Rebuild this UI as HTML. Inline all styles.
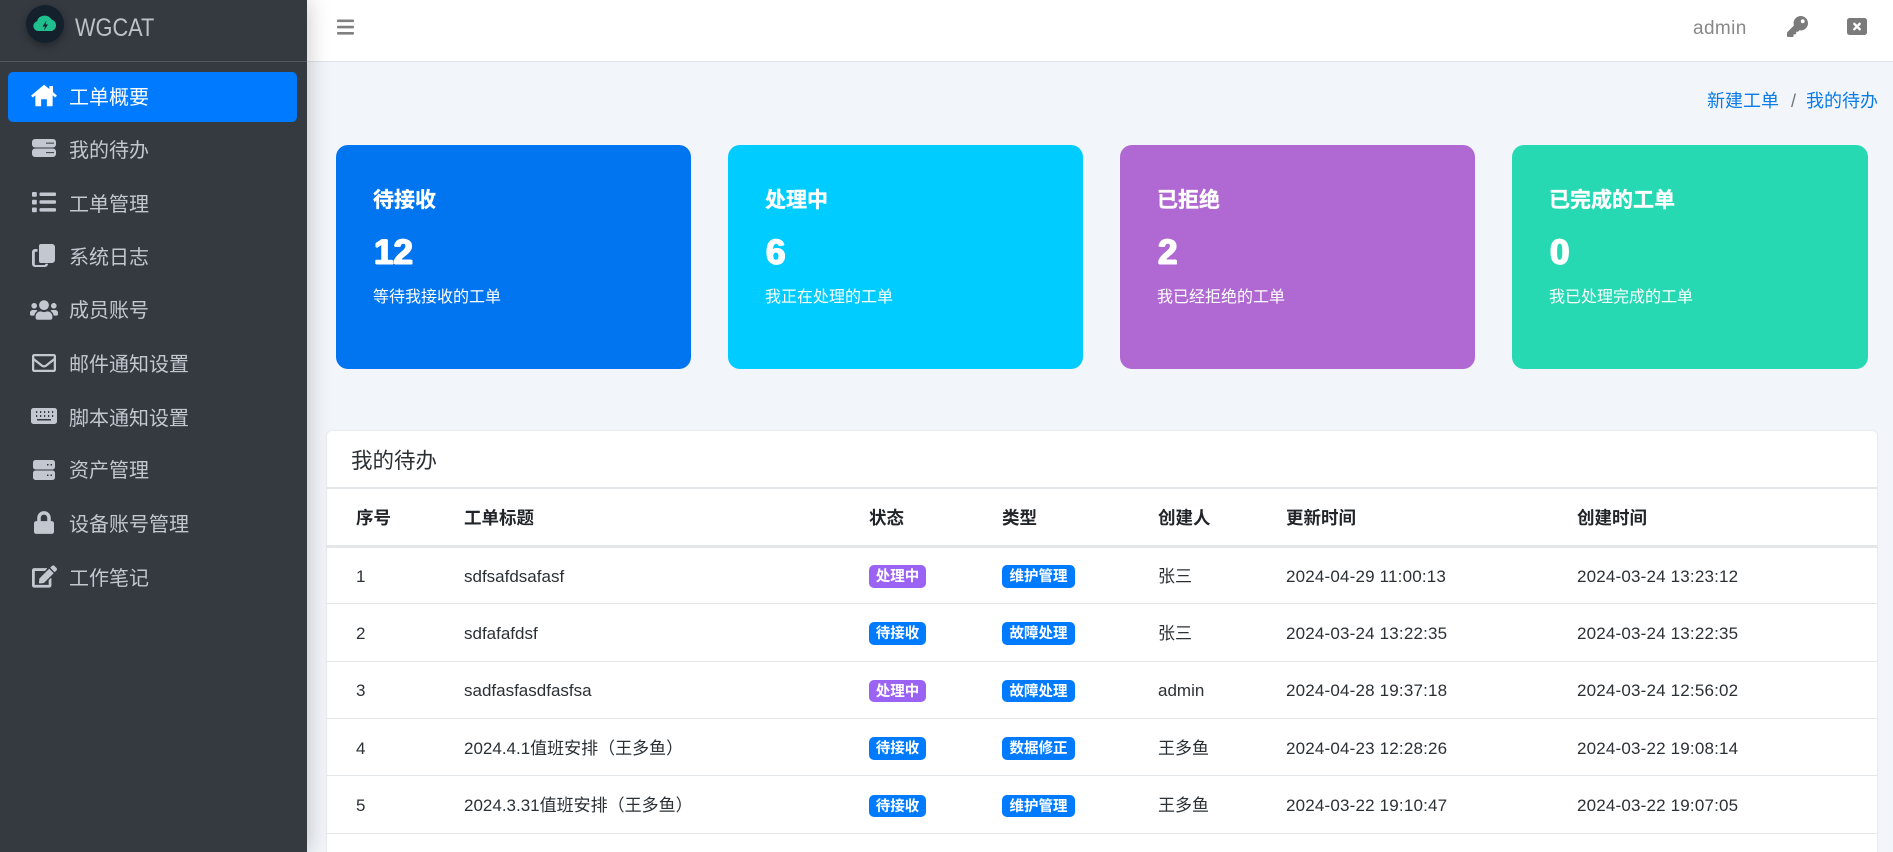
<!DOCTYPE html>
<html lang="zh-CN"><head><meta charset="utf-8"><title>WGCAT</title>
<style>
*{box-sizing:border-box}
html,body{margin:0;padding:0;width:1893px;height:852px;overflow:hidden;background:#f2f6fa;font-family:"Liberation Sans","Noto Sans CJK SC",sans-serif;color:#2b3035}
#root{position:relative;width:1893px;height:852px;overflow:hidden;background:#f2f6fa}
.a,.t,.nv,.b{position:absolute;white-space:nowrap}
.t{height:30px;line-height:30px;font-size:17px;margin-top:1px}
.d{letter-spacing:.18px}
#top{position:absolute;left:307px;top:0;width:1586px;height:62px;background:#fff;border-bottom:1px solid #dee2e6}
#side{position:absolute;left:0;top:0;width:307px;height:852px;background:#343a40;box-shadow:0 0 22px rgba(0,0,0,.24)}
#side hr{position:absolute;left:0;top:61px;width:307px;height:1px;margin:0;border:0;background:#4f5962}
.nv{left:69px;height:30px;line-height:30px;font-size:20px;color:#c2c7d0;margin-top:1px}
.ic{position:absolute;fill:#c2c7d0}
.card{position:absolute;top:145px;width:355px;height:224px;border-radius:12px;color:#fff}
.card b,.card i,.card span{position:absolute;left:37px;white-space:nowrap;font-style:normal}
.card b{top:41px;line-height:30px;font-size:21px;font-weight:700;-webkit-text-stroke:.3px #fff}
.card i{left:38px;top:86px;line-height:44px;font-size:35px;font-weight:700;text-shadow:.9px 0 #fff,-.9px 0 #fff,0 .6px #fff,0 -.6px #fff,.6px .4px #fff,-.6px -.4px #fff}
.card span{top:138px;line-height:30px;font-size:16px}
#panel{position:absolute;left:327px;top:431px;width:1550px;height:440px;background:#fff;border-radius:5px;box-shadow:0 0 2px rgba(0,0,0,.12)}
.ln{position:absolute;left:327px;width:1550px;height:2px;background:#e4e7ea}
.h{font-weight:700;font-size:17.5px;margin-top:2px;color:#212529}
.b{height:23px;line-height:23px;padding-top:1px;border-radius:5px;color:#fff;font-size:14.5px;font-weight:700;text-align:center;background:#007bff}
.p{background:#9b63f3}
.s{width:57px}
.l{width:73px}
</style></head><body><div id="root">

<div id="top"></div>
<svg class="a" style="left:337px;top:18px" width="18" height="18" viewBox="0 0 18 18" fill="#808080"><rect x="0" y="1.500" width="17" height="2.600" rx="1"/><rect x="0" y="7.800" width="17" height="2.600" rx="1"/><rect x="0" y="14" width="17" height="2.600" rx="1"/></svg>
<div class="t" style="left:1693px;top:12px;margin-top:2px;font-size:19px;color:#888;letter-spacing:.4px">admin</div>
<svg class="a" style="left:1787px;top:16px" width="21" height="21" viewBox="0 0 512 512" fill="#7b7b7b"><path d="M512 176.001C512 273.203 433.202 352 336 352c-11.220 0-22.190-1.062-32.827-3.069l-24.012 27.014A23.999 23.999 0 0 1 261.223 384H224v40c0 13.255-10.745 24-24 24h-40v40c0 13.255-10.745 24-24 24H24c-13.255 0-24-10.745-24-24v-78.059c0-6.365 2.529-12.470 7.029-16.971l161.802-161.802C163.108 213.814 160 195.271 160 176 160 78.798 238.797.001 335.999 0 433.488-.001 512 78.511 512 176.001zM336 128c0 26.510 21.490 48 48 48s48-21.490 48-48-21.490-48-48-48-48 21.490-48 48z"/></svg>
<svg class="a" style="left:1847px;top:18px" width="20" height="17" viewBox="0 0 20 17"><rect width="20" height="17" rx="2.500" fill="#7b7b7b"/><path d="M7.300 5.800l5.400 5.400M12.700 5.800l-5.400 5.400" stroke="#fff" stroke-width="2.400" stroke-linecap="round"/></svg>

<div class="t" style="left:1707px;top:85px;font-size:18px;color:#0a7be8">新建工单</div>
<div class="t" style="left:1791px;top:85px;font-size:18px;color:#6c757d">/</div>
<div class="t" style="left:1806px;top:85px;font-size:18px;color:#0a7be8">我的待办</div>

<div class="card" style="left:336px;background:#0075ef"><b>待接收</b><i>12</i><span>等待我接收的工单</span></div>
<div class="card" style="left:728px;background:#00ccff"><b>处理中</b><i>6</i><span>我正在处理的工单</span></div>
<div class="card" style="left:1120px;background:#b068d2"><b>已拒绝</b><i>2</i><span>我已经拒绝的工单</span></div>
<div class="card" style="left:1512px;width:356px;background:#26d9b3"><b>已完成的工单</b><i>0</i><span>我已处理完成的工单</span></div>

<div id="panel"></div>
<div class="t" style="left:351px;top:445px;font-size:21.500px">我的待办</div>
<div class="ln" style="top:487px"></div>
<div class="t h" style="left:356px;top:501px">序号</div>
<div class="t h" style="left:464px;top:501px">工单标题</div>
<div class="t h" style="left:869px;top:501px">状态</div>
<div class="t h" style="left:1002px;top:501px">类型</div>
<div class="t h" style="left:1158px;top:501px">创建人</div>
<div class="t h" style="left:1286px;top:501px">更新时间</div>
<div class="t h" style="left:1577px;top:501px">创建时间</div>
<div class="ln" style="top:545px;height:3px"></div>

<div class="t" style="left:356px;top:561px">1</div>
<div class="t" style="left:464px;top:561px">sdfsafdsafasf</div>
<div class="b s p" style="left:869px;top:565px">处理中</div>
<div class="b l" style="left:1002px;top:565px">维护管理</div>
<div class="t" style="left:1158px;top:561px">张三</div>
<div class="t d" style="left:1286px;top:561px">2024-04-29 11:00:13</div>
<div class="t d" style="left:1577px;top:561px">2024-03-24 13:23:12</div>
<div class="ln" style="top:603px;height:1px"></div>

<div class="t" style="left:356px;top:618px">2</div>
<div class="t" style="left:464px;top:618px">sdfafafdsf</div>
<div class="b s" style="left:869px;top:622px">待接收</div>
<div class="b l" style="left:1002px;top:622px">故障处理</div>
<div class="t" style="left:1158px;top:618px">张三</div>
<div class="t d" style="left:1286px;top:618px">2024-03-24 13:22:35</div>
<div class="t d" style="left:1577px;top:618px">2024-03-24 13:22:35</div>
<div class="ln" style="top:661px;height:1px"></div>

<div class="t" style="left:356px;top:675px">3</div>
<div class="t" style="left:464px;top:675px">sadfasfasdfasfsa</div>
<div class="b s p" style="left:869px;top:680px;height:22px;line-height:22px">处理中</div>
<div class="b l" style="left:1002px;top:680px;height:22px;line-height:22px">故障处理</div>
<div class="t" style="left:1158px;top:675px">admin</div>
<div class="t d" style="left:1286px;top:675px">2024-04-28 19:37:18</div>
<div class="t d" style="left:1577px;top:675px">2024-03-24 12:56:02</div>
<div class="ln" style="top:718px;height:1px"></div>

<div class="t" style="left:356px;top:733px">4</div>
<div class="t" style="left:464px;top:733px">2024.4.1值班安排（王多鱼）</div>
<div class="b s" style="left:869px;top:737px">待接收</div>
<div class="b l" style="left:1002px;top:737px">数据修正</div>
<div class="t" style="left:1158px;top:733px">王多鱼</div>
<div class="t d" style="left:1286px;top:733px">2024-04-23 12:28:26</div>
<div class="t d" style="left:1577px;top:733px">2024-03-22 19:08:14</div>
<div class="ln" style="top:775px;height:1px"></div>

<div class="t" style="left:356px;top:790px">5</div>
<div class="t" style="left:464px;top:790px">2024.3.31值班安排（王多鱼）</div>
<div class="b s" style="left:869px;top:795px;height:22px;line-height:22px">待接收</div>
<div class="b l" style="left:1002px;top:795px;height:22px;line-height:22px">维护管理</div>
<div class="t" style="left:1158px;top:790px">王多鱼</div>
<div class="t d" style="left:1286px;top:790px">2024-03-22 19:10:47</div>
<div class="t d" style="left:1577px;top:790px">2024-03-22 19:07:05</div>
<div class="ln" style="top:833px;height:1px"></div>

<div id="side">
<div class="a" style="left:26px;top:5px;width:38px;height:38px;border-radius:50%;background:#14202b;box-shadow:0 3px 8px rgba(0,0,0,.35)"></div>
<svg class="a" style="left:33px;top:14px" width="24" height="18" viewBox="0 0 24 18"><path d="M5 17a5 5 0 0 1-1-9.800A8 8 0 0 1 18.500 5.500 6 6 0 0 1 19 17z" fill="#1fc08e"/><path d="M13.500 6.500l-4 6h2.500l-1 4 4-6h-2.500z" fill="#14202b"/></svg>
<div class="a" style="left:75px;top:13px;line-height:30px;font-size:25px;color:#bcc1c6;transform:scaleX(.87);transform-origin:0 50%">WGCAT</div>
<hr>
<div class="a" style="left:8px;top:72px;width:289px;height:50px;background:#007bff;border-radius:5px"></div>

<svg class="ic" style="left:31px;top:84px;fill:#fff" width="26" height="23" viewBox="0 0 576 512"><path d="M288 16L408 112V44h80v138l88 76-38 42-58-46V480a16 16 0 0 1-16 16H352V340H224V496H112a16 16 0 0 1-16-16V254L38 300 0 258z"/></svg>
<div class="nv" style="top:82px;color:#fff">工单概要</div>

<svg class="ic" style="left:32px;top:139px" width="24" height="18" viewBox="0 0 24 18"><path fill-rule="evenodd" d="M3 0h18a3 3 0 0 1 3 3v2.500a3 3 0 0 1-3 3H3a3 3 0 0 1-3-3V3a3 3 0 0 1 3-3zm11 3.600v1h8v-1zM3 9.500h18a3 3 0 0 1 3 3V15a3 3 0 0 1-3 3H3a3 3 0 0 1-3-3v-2.500a3 3 0 0 1 3-3zm11 3.600v1h8v-1z"/></svg>
<div class="nv" style="top:135px">我的待办</div>

<svg class="ic" style="left:32px;top:191px" width="24" height="22" viewBox="0 0 24 22"><rect x="0" y="1" width="4.800" height="4.800" rx="1"/><rect x="0" y="8.700" width="4.800" height="4.800" rx="1"/><rect x="0" y="16.500" width="4.800" height="4.800" rx="1"/><rect x="7.500" y="1.500" width="16.500" height="3.500" rx="1"/><rect x="7.500" y="9.300" width="16.500" height="3.500" rx="1"/><rect x="7.500" y="17.100" width="16.500" height="3.500" rx="1"/></svg>
<div class="nv" style="top:189px">工单管理</div>

<svg class="ic" style="left:32px;top:244px" width="23" height="23" viewBox="0 0 23 23"><path d="M9 0h11a3 3 0 0 1 3 3v13a3 3 0 0 1-3 3H9a2 2 0 0 1-2-2V2a2 2 0 0 1 2-2z"/><path d="M5.500 5H3a3 3 0 0 0-3 3v12a3 3 0 0 0 3 3h10a3 3 0 0 0 3-3v-.2h-2.800v.4a.8.8 0 0 1-.8.8H3.600a.8.8 0 0 1-.8-.8V8.600a.8.8 0 0 1 .8-.8h1.900z"/></svg>
<div class="nv" style="top:242px">系统日志</div>

<svg class="ic" style="left:30px;top:298px" width="28" height="24" viewBox="0 0 640 512"><path d="M96 224c35.300 0 64-28.700 64-64s-28.700-64-64-64-64 28.700-64 64 28.700 64 64 64zm448 0c35.300 0 64-28.700 64-64s-28.700-64-64-64-64 28.700-64 64 28.700 64 64 64zm32 32h-64c-17.600 0-33.500 7.100-45.100 18.600 40.300 22.100 68.900 62 75.100 109.400h66c17.700 0 32-14.300 32-32v-32c0-35.300-28.700-64-64-64zm-256 0c61.900 0 112-50.100 112-112S381.900 32 320 32 208 82.100 208 144s50.100 112 112 112zm76.800 32h-8.300c-20.800 10-43.900 16-68.500 16s-47.600-6-68.500-16h-8.300C179.600 288 128 339.600 128 403.200V432c0 26.500 21.500 48 48 48h288c26.500 0 48-21.500 48-48v-28.800c0-63.600-51.600-115.200-115.200-115.200zm-223.700-13.400C161.500 263.100 145.600 256 128 256H64c-35.300 0-64 28.700-64 64v32c0 17.700 14.300 32 32 32h65.900c6.300-47.400 34.900-87.300 75.200-109.400z"/></svg>
<div class="nv" style="top:295px">成员账号</div>

<svg class="ic" style="left:32px;top:351px" width="24" height="24" viewBox="0 0 512 512"><path d="M464 64H48C21.490 64 0 85.490 0 112v288c0 26.510 21.490 48 48 48h416c26.510 0 48-21.490 48-48V112c0-26.510-21.490-48-48-48zm0 48v40.805c-22.422 18.259-58.168 46.651-134.587 106.490-16.841 13.247-50.201 45.072-73.413 44.701-23.208.375-56.579-31.459-73.413-44.701C106.180 199.465 70.425 171.067 48 152.805V112h416zM48 400V214.398c22.914 18.251 55.409 43.862 104.938 82.646 21.857 17.205 60.134 55.186 103.062 54.955 42.717.231 80.509-37.199 103.053-54.947 49.528-38.783 82.032-64.401 104.947-82.653V400H48z"/></svg>
<div class="nv" style="top:349px">邮件通知设置</div>

<svg class="ic" style="left:31px;top:406px" width="26" height="20" viewBox="0 0 26 20"><path fill-rule="evenodd" d="M2.500 2h21A2.500 2.500 0 0 1 26 4.500v11a2.500 2.500 0 0 1-2.500 2.500h-21A2.500 2.500 0 0 1 0 15.500v-11A2.500 2.500 0 0 1 2.500 2zM5 5v2h1.200V5zm4 0v2h1.200V5zm4 0v2h1.200V5zm4 0v2h1.200V5zm4 0v2h1.200V5zM5 9v2h1.200V9zm4 0v2h1.200V9zm4 0v2h1.200V9zm4 0v2h1.200V9zm4 0v2h1.200V9zM6 13v1.500h14V13z"/></svg>
<div class="nv" style="top:403px">脚本通知设置</div>

<svg class="ic" style="left:33px;top:460px" width="22" height="20" viewBox="0 0 22 20"><path fill-rule="evenodd" d="M2.500 0h17A2.500 2.500 0 0 1 22 2.500v4.500A2.500 2.500 0 0 1 19.500 9.500h-17A2.500 2.500 0 0 1 0 7V2.500A2.500 2.500 0 0 1 2.500 0zM14 4v1.500h1.500V4zm3.500 0v1.500H19V4zM2.500 10.500h17a2.500 2.500 0 0 1 2.500 2.500v4.500a2.500 2.500 0 0 1-2.500 2.500h-17A2.500 2.500 0 0 1 0 17.500V13a2.500 2.500 0 0 1 2.500-2.500zM14 14.500V16h1.500v-1.500zm3.500 0V16H19v-1.500z"/></svg>
<div class="nv" style="top:455px">资产管理</div>

<svg class="ic" style="left:34px;top:511px" width="20" height="23" viewBox="0 0 448 512"><path d="M400 224h-24v-72C376 68.200 307.800 0 224 0S72 68.200 72 152v72H48c-26.500 0-48 21.500-48 48v192c0 26.500 21.500 48 48 48h352c26.500 0 48-21.500 48-48V272c0-26.500-21.500-48-48-48zm-104 0H152v-72c0-39.700 32.300-72 72-72s72 32.300 72 72v72z"/></svg>
<div class="nv" style="top:509px">设备账号管理</div>

<svg class="ic" style="left:32px;top:565px" width="25" height="23" viewBox="0 0 576 512"><path d="M402.600 83.200l90.200 90.200c3.800 3.800 3.800 10 0 13.800L274.400 405.600l-92.800 10.300c-12.400 1.400-22.900-9.100-21.500-21.500l10.300-92.800L388.800 83.200c3.800-3.800 10-3.800 13.800 0zm162-22.900l-48.800-48.800c-15.200-15.200-39.900-15.200-55.200 0l-35.400 35.400c-3.800 3.800-3.800 10 0 13.800l90.200 90.200c3.800 3.800 10 3.800 13.800 0l35.400-35.400c15.200-15.300 15.200-40 0-55.200zM384 346.200V448H64V128h229.800c3.200 0 6.200-1.300 8.500-3.500l40-40c7.600-7.600 2.200-20.500-8.500-20.500H48C21.500 64 0 85.500 0 112v352c0 26.500 21.500 48 48 48h352c26.500 0 48-21.500 48-48V306.200c0-10.700-12.900-16-20.500-8.500l-40 40c-2.200 2.300-3.500 5.300-3.500 8.500z"/></svg>
<div class="nv" style="top:563px">工作笔记</div>
</div>
</div></body></html>
